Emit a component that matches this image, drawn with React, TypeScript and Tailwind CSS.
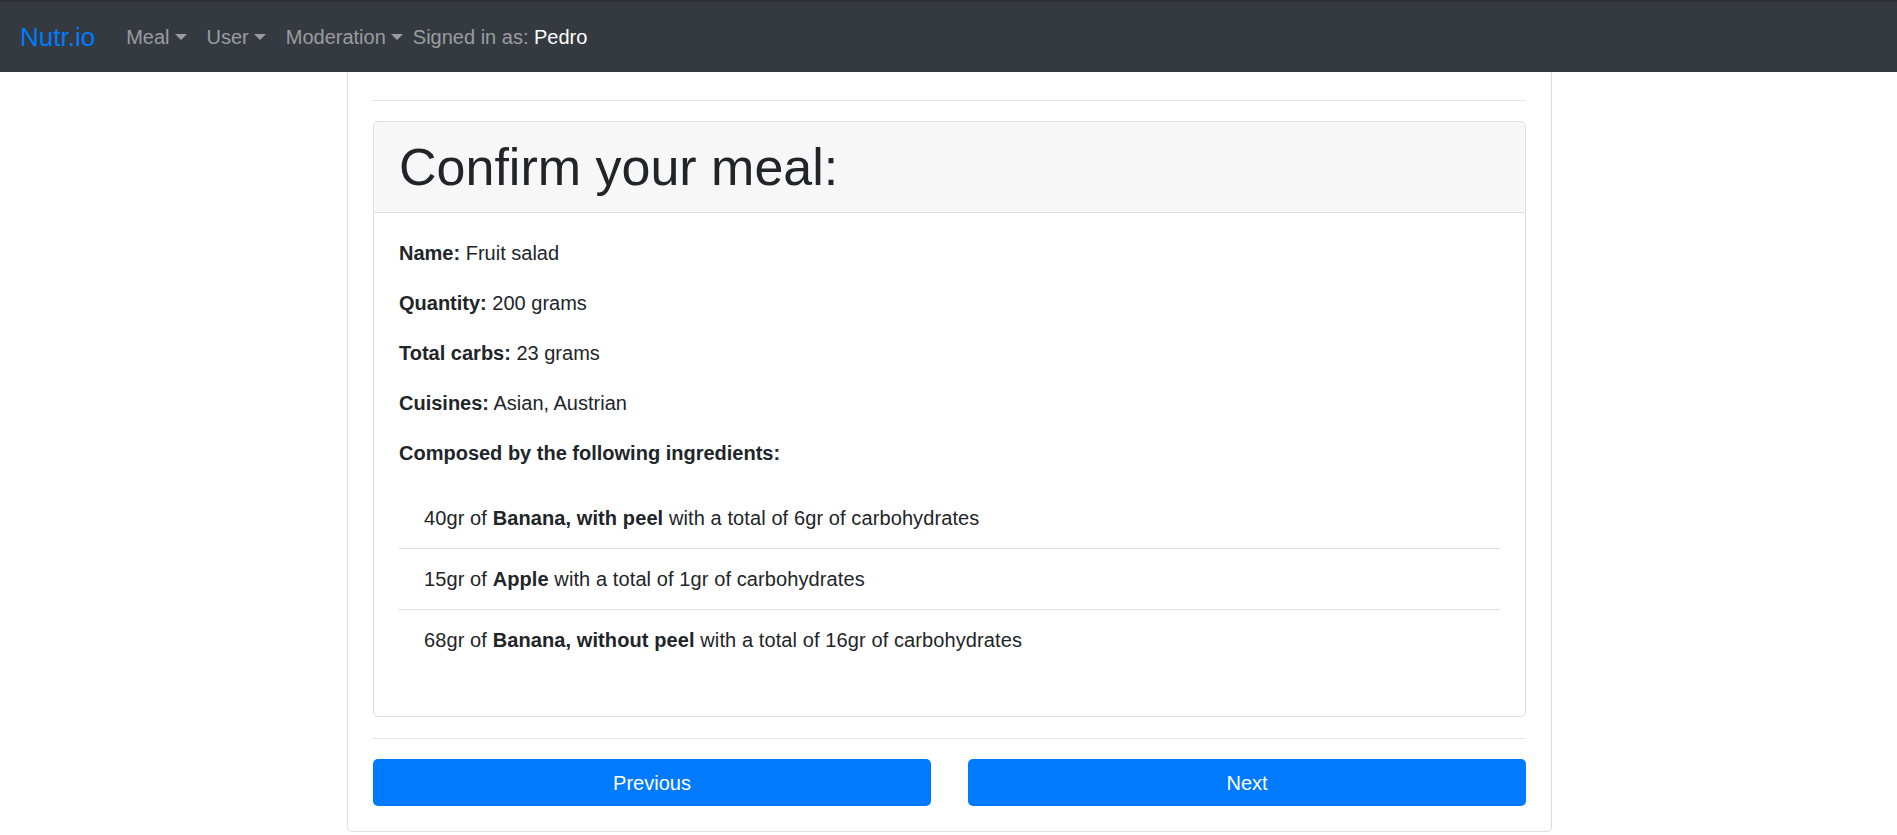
import React from "react";

function Caret() {
  return (
    <span className="inline-block ml-[5px] align-[4px] w-0 h-0 border-t-[6px] border-x-[6px] border-b-0 border-x-transparent border-t-current" />
  );
}

function NavDropdown({ label }: { label: string }) {
  return (
    <span className="px-[10px] text-white/50 whitespace-nowrap">
      {label}
      <Caret />
    </span>
  );
}

function Field({ label, value }: { label: string; value?: string }) {
  return (
    <p className="mb-[20px] leading-[30px]">
      <span className="font-bold">{label}</span>
      {value ? " " + value : null}
    </p>
  );
}

function Ingredient({
  qty,
  name,
  carbs,
  last,
}: {
  qty: string;
  name: string;
  carbs: string;
  last?: boolean;
}) {
  return (
    <li
      className={
        "px-[25px] py-[15px] leading-[30px] tracking-[0.1px] " +
        (last ? "" : "border-b border-[#dfdfdf]")
      }
    >
      {qty} of <span className="font-bold">{name}</span> with a total of {carbs} of carbohydrates
    </li>
  );
}

export default function App() {
  return (
    <div className="min-h-screen bg-white font-['Liberation_Sans',Arial,sans-serif] text-[20px] text-[#212529]">
      <nav className="h-[72px] bg-[#343a40] border-t-2 border-[#2d3135] flex items-center px-[20px] text-[20px] leading-[30px]">
        <span className="text-[26px] text-[#007bff] mr-[21px]">Nutr.io</span>
        <NavDropdown label="Meal" />
        <NavDropdown label="User" />
        <NavDropdown label="Moderation" />
        <span className="text-white/50 whitespace-nowrap">
          Signed in as: <span className="text-white">Pedro</span>
        </span>
      </nav>

      <div className="ml-[347px] w-[1205px] border border-t-0 border-[#dfdfdf] rounded-b-[5px] px-[25px] pt-[28px] pb-[25px]">
        <hr className="border-0 border-t border-[#e6e6e6] mb-[20px]" />

        <div className="border border-[#dfdfdf] rounded-[5px]">
          <div className="bg-[#f7f7f7] border-b border-[#dfdfdf] rounded-t-[5px] px-[25px] py-[15px]">
            <h1 className="text-[52px] leading-[60px] font-medium">Confirm your meal:</h1>
          </div>
          <div className="px-[25px] pt-[25px] pb-[26px]">
            <Field label="Name:" value="Fruit salad" />
            <Field label="Quantity:" value="200 grams" />
            <Field label="Total carbs:" value="23 grams" />
            <Field label="Cuisines:" value="Asian, Austrian" />
            <Field label="Composed by the following ingredients:" />
            <ul className="mb-[20px]">
              <Ingredient qty="40gr" name="Banana, with peel" carbs="6gr" />
              <Ingredient qty="15gr" name="Apple" carbs="1gr" />
              <Ingredient qty="68gr" name="Banana, without peel" carbs="16gr" last />
            </ul>
          </div>
        </div>

        <hr className="border-0 border-t border-[#e6e6e6] mt-[21px] mb-[20px]" />

        <div className="grid grid-cols-2 gap-x-[37px]">
          <button className="h-[47px] rounded-[5px] bg-[#007bff] text-white text-[20px] flex items-center justify-center">
            Previous
          </button>
          <button className="h-[47px] rounded-[5px] bg-[#007bff] text-white text-[20px] flex items-center justify-center">
            Next
          </button>
        </div>
      </div>
    </div>
  );
}
